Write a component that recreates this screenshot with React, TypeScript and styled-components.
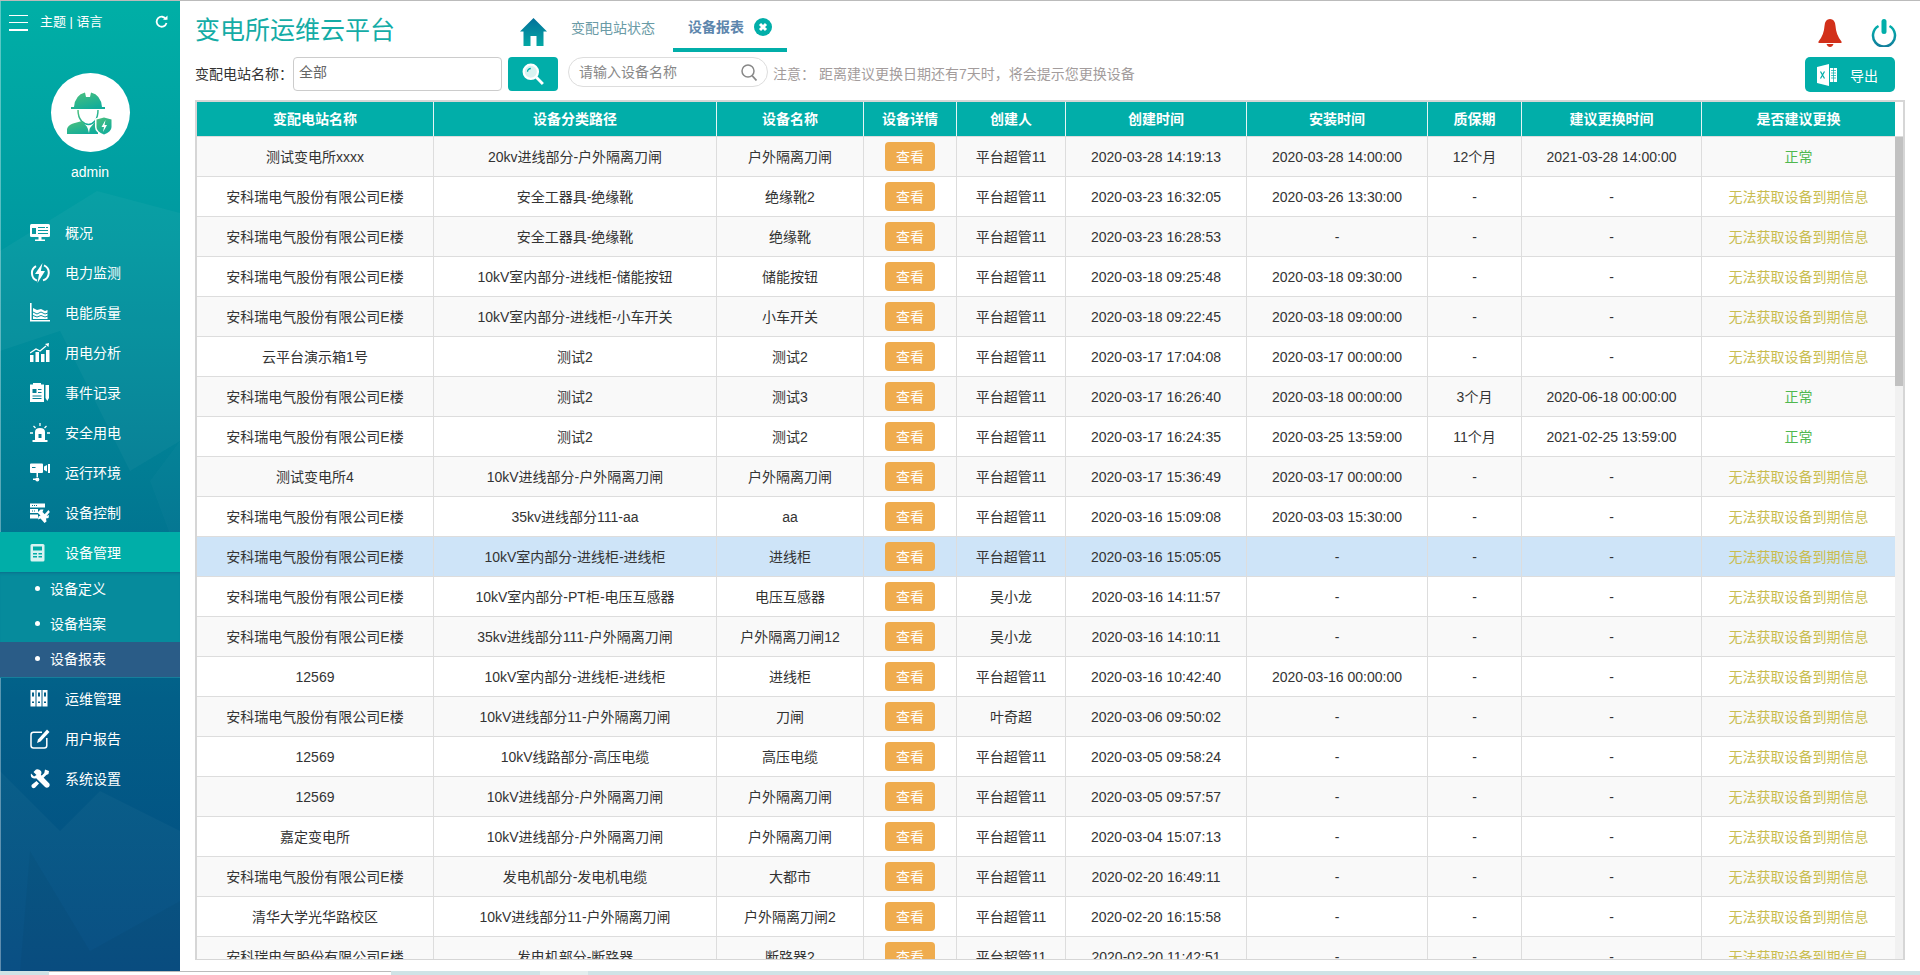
import React from "react";
import styled, { createGlobalStyle } from "styled-components";

const Global = createGlobalStyle`
  html, body { margin: 0; padding: 0; height: 100%; overflow: hidden; background: #fff; }
  body { font-family: "Liberation Sans", "Noto Sans CJK SC", sans-serif; font-size: 14px; line-height: 20px; color: #333; }
  * { box-sizing: border-box; }
`;

const TEAL = "#01aea9";
const COLS = "236px 283px 147px 93px 109px 181px 181px 94px 180px 194px";

const Page = styled.div`
  width: 1920px;
  height: 975px;
  display: flex;
  flex-direction: column;
  border-top: 1px solid #bbb;
`;
const Body = styled.div`
  flex: 1;
  min-height: 0;
  display: flex;
`;
const Sidebar = styled.aside`
  position: relative;
  width: 180px;
  flex: none;
  background: linear-gradient(180deg, #00afa6 0%, #0098a0 25%, #017b93 50%, #025f88 72%, #034a80 100%);
  box-shadow: inset 1px 0 rgba(255, 255, 255, 0.35);
  color: #fff;
  overflow: hidden;
`;
const SideArt = styled.svg`
  position: absolute;
  left: 0;
  top: 0;
  width: 180px;
  height: 970px;
  pointer-events: none;
`;
const SideContent = styled.div`
  position: relative;
`;
const SideTop = styled.div`
  height: 43px;
  display: flex;
  align-items: center;
  padding: 0 12px 0 9px;
  font-size: 13px;
`;
const SideTopLabel = styled.span`
  margin: -2px 0 0 12px;
  flex: 1;
`;
const Refresh = styled.svg`
  margin-top: -3px;
`;
const Burger = styled.span`
  width: 19px;
  height: 16px;
  flex: none;
  display: flex;
  flex-direction: column;
  justify-content: space-between;
  & > i { display: block; height: 1.5px; background: #fff; }
`;
const Profile = styled.div`
  display: flex;
  flex-direction: column;
  align-items: center;
  padding-top: 29px;
  height: 168px;
`;
const Avatar = styled.div`
  width: 79px;
  height: 79px;
  border-radius: 50%;
  background: #fff;
  display: flex;
  align-items: center;
  justify-content: center;
`;
const UserName = styled.div`
  margin-top: 12px;
  line-height: 16px;
  font-size: 14px;
`;
const MenuItem = styled.div<{ $active?: boolean }>`
  height: 40px;
  display: flex;
  align-items: center;
  padding: 2px 0 0 30px;
  background: ${(p) => (p.$active ? "#00aea8" : "transparent")};
  & > svg { width: 20px; height: 20px; flex: none; margin-right: 15px; }
`;
const SubList = styled.div`
  background: #068b9c;
  box-shadow: inset 0 3px 3px -2px rgba(20, 70, 120, 0.45);
  border-bottom: 1px solid #167f9c;
`;
const SubItem = styled.div<{ $active?: boolean }>`
  height: 35px;
  display: flex;
  align-items: center;
  padding: 0 0 2px 35px;
  background: ${(p) => (p.$active ? "#2a5c87" : "transparent")};
  &::before {
    content: "";
    width: 5px;
    height: 5px;
    border-radius: 50%;
    background: #fff;
    margin-right: 10px;
  }
`;
const Main = styled.main`
  flex: 1;
  min-width: 0;
  display: flex;
  flex-direction: column;
  padding: 0 15px 11px 15px;
  background: #fff;
`;
const Header = styled.header`
  height: 51px;
  display: flex;
  align-items: flex-start;
`;
const Title = styled.h1`
  margin: 14px 0 0;
  width: 325px;
  font-size: 25px;
  line-height: 30px;
  font-weight: 400;
  color: #14aca6;
`;
const HomeLink = styled.span`
  margin-top: 17px;
  width: 27px;
  height: 28px;
  flex: none;
  display: block;
  & > svg { display: block; }
`;
const Tabs = styled.nav`
  display: flex;
  margin-left: 23px;
`;
const Tab = styled.span`
  margin: 17px 18px 0 1px;
  line-height: 20px;
  height: 20px;
  color: #6a9ba6;
  font-size: 14px;
`;
const ActiveTab = styled.span`
  height: 51px;
  width: 114px;
  padding: 16px 0 0 15px;
  border-bottom: 4px solid ${TEAL};
  display: flex;
  align-items: flex-start;
  gap: 10px;
  color: #5d86ad;
  font-weight: 700;
  font-size: 14px;
  line-height: 20px;
  & > svg { margin-top: 1px; }
`;
const HeadRight = styled.div`
  margin-left: auto;
  margin-right: 8px;
  display: flex;
  gap: 29px;
  padding-top: 18px;
`;
const Toolbar = styled.div`
  height: 48px;
  padding-top: 5px;
  display: flex;
  align-items: flex-start;
`;
const FieldLabel = styled.label`
  margin-top: 9px;
  font-size: 14px;
  line-height: 16px;
  width: 98px;
  color: #333;
`;
const SelectBox = styled.div`
  width: 209px;
  height: 34px;
  border: 1px solid #ccc;
  border-radius: 4px;
  padding-left: 5px;
  line-height: 28px;
  color: #666;
  font-size: 14px;
`;
const SearchBtn = styled.button`
  width: 50px;
  height: 34px;
  margin-left: 6px;
  border: 0;
  padding: 0;
  border-radius: 4px;
  background: ${TEAL};
  display: flex;
  align-items: center;
  justify-content: center;
`;
const SearchWrap = styled.div`
  width: 200px;
  height: 30px;
  margin-left: 10px;
  border: 1px solid #ddd;
  border-radius: 15px;
  display: flex;
  align-items: center;
  padding: 0 10px 0 10px;
  color: #888;
  font-size: 14px;
  justify-content: space-between;
`;
const Note = styled.div`
  margin-left: 5px;
  margin-top: 7px;
  line-height: 20px;
  font-size: 14px;
  color: #a39c9c;
  display: flex;
  gap: 4px;
`;
const ExportBtn = styled.button`
  margin-left: auto;
  margin-right: 10px;
  width: 90px;
  height: 35px;
  border: 0;
  border-radius: 5px;
  background: ${TEAL};
  color: #fff;
  font: 14px "Liberation Sans", "Noto Sans CJK SC", sans-serif;
  display: flex;
  align-items: center;
  padding: 0 0 0 12px;
  gap: 13px;
`;
const TableBox = styled.section`
  flex: 1;
  min-height: 0;
  display: flex;
  flex-direction: column;
  width: 1710px;
  border: 2px solid #d6d6d6;
  border-bottom-width: 1px;
`;
const HeadRow = styled.div`
  flex: none;
  display: grid;
  grid-template-columns: ${COLS};
  height: 35px;
  border-bottom: 1px solid #ddd;
`;
const HeadCell = styled.div`
  background: ${TEAL};
  color: #fff;
  font-weight: 700;
  display: flex;
  align-items: center;
  justify-content: center;
  & + & { border-left: 1px solid #e4f5f4; }
`;
const TableBody = styled.div`
  flex: 1;
  min-height: 0;
  display: flex;
`;
const RowsViewport = styled.div`
  flex: 1;
  min-width: 0;
  overflow: hidden;
`;
const ScrollTrack = styled.div`
  flex: none;
  width: 8px;
  background: #f1f1f1;
`;
const ScrollThumb = styled.div`
  height: 249px;
  background: #c1c1c1;
`;
const Row = styled.div<{ $tone: "odd" | "even" | "hit" }>`
  display: grid;
  grid-template-columns: ${COLS};
  height: 40px;
  border-bottom: 1px solid #ddd;
  background: ${(p) => (p.$tone === "hit" ? "#cee4f8" : p.$tone === "odd" ? "#f9f9f9" : "#fff")};
`;
const Cell = styled.div<{ $color?: string }>`
  display: flex;
  align-items: center;
  justify-content: center;
  white-space: nowrap;
  color: ${(p) => p.$color || "#333"};
  & + & { border-left: 1px solid #ddd; }
`;
const ViewBtn = styled.button`
  width: 50px;
  height: 29px;
  margin-top: -1px;
  border: 0;
  padding: 0;
  border-radius: 4px;
  background: #efac4e;
  color: #fff;
  font: 14px "Liberation Sans", "Noto Sans CJK SC", sans-serif;
`;
const BottomStrip = styled.div`
  flex: none;
  height: 4px;
  display: grid;
  grid-template-columns: 49px 342px 149px 48px 1fr;
  background: #cfe3e6;
`;
const StripTab = styled.span<{ $tone?: string }>`
  background: ${(p) => p.$tone || "transparent"};
  ${(p) => (p.$tone === "#fff" ? "border-top: 1px solid #bbb;" : "")}
`;

const S = "安科瑞电气股份有限公司E楼";
const P = "平台超管11";
const N = "无法获取设备到期信息";
type R = [string, string, string, string, string, string, string?, string?];
const rows: R[] = [
  ["测试变电所xxxx", "20kv进线部分-户外隔离刀闸", "户外隔离刀闸", P, "2020-03-28 14:19:13", "2020-03-28 14:00:00", "12个月", "2021-03-28 14:00:00"],
  [S, "安全工器具-绝缘靴", "绝缘靴2", P, "2020-03-23 16:32:05", "2020-03-26 13:30:00"],
  [S, "安全工器具-绝缘靴", "绝缘靴", P, "2020-03-23 16:28:53", "-"],
  [S, "10kV室内部分-进线柜-储能按钮", "储能按钮", P, "2020-03-18 09:25:48", "2020-03-18 09:30:00"],
  [S, "10kV室内部分-进线柜-小车开关", "小车开关", P, "2020-03-18 09:22:45", "2020-03-18 09:00:00"],
  ["云平台演示箱1号", "测试2", "测试2", P, "2020-03-17 17:04:08", "2020-03-17 00:00:00"],
  [S, "测试2", "测试3", P, "2020-03-17 16:26:40", "2020-03-18 00:00:00", "3个月", "2020-06-18 00:00:00"],
  [S, "测试2", "测试2", P, "2020-03-17 16:24:35", "2020-03-25 13:59:00", "11个月", "2021-02-25 13:59:00"],
  ["测试变电所4", "10kV进线部分-户外隔离刀闸", "户外隔离刀闸", P, "2020-03-17 15:36:49", "2020-03-17 00:00:00"],
  [S, "35kv进线部分111-aa", "aa", P, "2020-03-16 15:09:08", "2020-03-03 15:30:00"],
  [S, "10kV室内部分-进线柜-进线柜", "进线柜", P, "2020-03-16 15:05:05", "-"],
  [S, "10kV室内部分-PT柜-电压互感器", "电压互感器", "吴小龙", "2020-03-16 14:11:57", "-"],
  [S, "35kv进线部分111-户外隔离刀闸", "户外隔离刀闸12", "吴小龙", "2020-03-16 14:10:11", "-"],
  ["12569", "10kV室内部分-进线柜-进线柜", "进线柜", P, "2020-03-16 10:42:40", "2020-03-16 00:00:00"],
  [S, "10kV进线部分11-户外隔离刀闸", "刀闸", "叶奇超", "2020-03-06 09:50:02", "-"],
  ["12569", "10kV线路部分-高压电缆", "高压电缆", P, "2020-03-05 09:58:24", "-"],
  ["12569", "10kV进线部分-户外隔离刀闸", "户外隔离刀闸", P, "2020-03-05 09:57:57", "-"],
  ["嘉定变电所", "10kV进线部分-户外隔离刀闸", "户外隔离刀闸", P, "2020-03-04 15:07:13", "-"],
  [S, "发电机部分-发电机电缆", "大都市", P, "2020-02-20 16:49:11", "-"],
  ["清华大学光华路校区", "10kV进线部分11-户外隔离刀闸", "户外隔离刀闸2", P, "2020-02-20 16:15:58", "-"],
  [S, "发电机部分-断路器", "断路器2", P, "2020-02-20 11:42:51", "-"],
];
const heads = ["变配电站名称", "设备分类路径", "设备名称", "设备详情", "创建人", "创建时间", "安装时间", "质保期", "建议更换时间", "是否建议更换"];

const W = "#fff";
const icons: Record<string, React.ReactNode> = {
  overview: (
    <svg viewBox="0 0 20 20">
      <path d="M0 2.500Q0 1 1.500 1h17Q20 1 20 2.500V13q0 1-1.500 1h-17Q0 14 0 13z" fill={W} />
      <path d="M2 5h4v6H2zM8 4h7v1H8zM16 4h2v1h-2zM8 7h10v1H8zM8 10h10v1H8z" fill="#0a9aa0" />
      <path d="M8.500 14h3v2.500H15V18H5v-1.500h3.500z" fill={W} />
    </svg>
  ),
  power: (
    <svg viewBox="0 0 20 20">
      <path d="M6 3.200A8 8 0 0 0 7 17.600M14 2.400a8 8 0 0 1-1 15" fill="none" stroke={W} strokeWidth="2" />
      <path d="M12.500 0L5 11h4l-1.500 9L15 8h-4.200z" fill={W} />
    </svg>
  ),
  quality: (
    <svg viewBox="0 0 20 20">
      <path d="M0 0h1.600v17H20v1.600H0z" fill={W} />
      <path d="M3 5l4 2 4-1 4 2 2.500-1v9H3z" fill={W} />
      <path d="M3 9l4 2 4-2 4 2 3-1M3 12.500l4 1.500 4-1.500 4 1.500 3-1" fill="none" stroke="#0a92a0" strokeWidth="1" />
    </svg>
  ),
  analysis: (
    <svg viewBox="0 0 20 20">
      <path d="M0 12h3.500v7H0zM5.500 9H9v10H5.500zM11 11h3.500v8H11zM16 7h3.500v12H16z" fill={W} />
      <path d="M0 10l6-4 4 2 6-5" fill="none" stroke={W} strokeWidth="1.300" />
      <path d="M15 1l4-1-.5 4z" fill={W} />
    </svg>
  ),
  events: (
    <svg viewBox="0 0 20 20">
      <path d="M0 1.500h14V19H0zM15.500 2H19v13l-1.700 3-1.800-3z" fill={W} />
      <path d="M3 0h8v3H3z" fill={W} />
      <path d="M2.500 6h4v4h-4zM8 6h3.500v1H8zM8 9h3.500v1H8zM2.500 12.500h9v1h-9zM2.500 15h9v1h-9z" fill="#067f95" />
    </svg>
  ),
  safety: (
    <svg viewBox="0 0 20 20">
      <path d="M5 17V9q0-4 5-4t5 4v8z" fill={W} />
      <path d="M2.500 17h15v2h-15z" fill={W} />
      <path d="M8.500 11h3v4h-3z" fill="#067c93" />
      <path d="M10 0v3M3.500 3l2 2M16.500 3l-2 2M0 10h3M17 10h3" stroke={W} strokeWidth="1.300" />
    </svg>
  ),
  env: (
    <svg viewBox="0 0 20 20">
      <path d="M0 1.500Q0 .5 1 .5h11q1 0 1 1V9q0 1-1 1H1q-1 0-1-1zM14 3.500l3-1.500v6.500l-3-1.500zM18 1h2v9h-2z" fill={W} />
      <path d="M2 4h3.500v1H2z" fill="#067a92" />
      <path d="M6.500 10h1.500v4H6.500zM3 15.500h3v1.500H3z" fill={W} />
      <circle cx="7.300" cy="16.500" r="2" fill={W} />
    </svg>
  ),
  control: (
    <svg viewBox="0 0 20 20">
      <path d="M0 .5h15v4H0zM0 6h8v4H0zM0 11.500h8v4H0z" fill={W} />
      <path d="M10.500 6.500h3l-1 2.500 4 4 2.500-1-.5 3-2.500.5.500 3-2 1.500-4-4.500-2.500 1 .5-3 2-1-3-3z" fill={W} />
      <path d="M18.500 7L13 13l2 2 4.800-6z" fill={W} />
      <path d="M2 2h1v1H2zM4 2h1v1H4zM6 2h1v1H6zM2 7.500h1v1H2zM4 7.500h1v1H4z" fill="#027992" />
    </svg>
  ),
  device: (
    <svg viewBox="0 0 20 20">
      <path d="M2 1h11q1.500 0 1.500 1.500v14.500q0 1.500-1.500 1.500H2q-1.500 0-1.500-1.500V2.500Q.5 1 2 1z" fill="#d8f3f1" />
      <path d="M3 3.500h9v4H3zM3 10h4v1.500H3zM8.500 10h3.500v1.500H8.500zM8.500 13h3.500v1.500H8.500zM3 13h4v1.500H3z" fill="#02aca6" />
    </svg>
  ),
  ops: (
    <svg viewBox="0 0 20 20">
      <path d="M.5 1h5v16.500h-5zM6.500 1h5v16.500h-5zM12.500 1h5v16.500h-5z" fill={W} />
      <path d="M2 3.500h2v4H2zM8 3.500h2v4H8zM14 3.500h2v4h-2zM2 12.500h2v1.500H2zM8 12.500h2v1.500H8zM14 12.500h2v1.500h-2z" fill="#035f88" />
    </svg>
  ),
  report: (
    <svg viewBox="0 0 20 20">
      <path d="M12 3.200H3.500Q1 3.200 1 5.700v10.800q0 2.500 2.500 2.500h10.800q2.500 0 2.500-2.500V9" fill="none" stroke={W} strokeWidth="1.500" />
      <path d="M17 .5L19.500 3 10.500 12.500 7 14l1-3.500z" fill={W} />
    </svg>
  ),
  settings: (
    <svg viewBox="0 0 20 20">
      <path d="M1 4.500L4 7.500 6.500 6 3.500 3 6 .5q3-.8 5 1.500 1 2-.2 3.800l8.500 8.700q1 1.800-.5 3.500-2 1.400-4-.2L6.200 9.300Q3.500 10 1.700 8.500.4 7 1 4.500z" fill={W} />
      <path d="M15 .5l4 1.500-.5 3-2.200 1-3 3-2-2 3-3zM6.500 12L9 14.500l-4 4.300q-1.600 1-3-.3-1.200-1.500-.2-2.800z" fill={W} />
    </svg>
  ),
};

const menuBefore: [string, string, boolean?][] = [
  ["overview", "概况"],
  ["power", "电力监测"],
  ["quality", "电能质量"],
  ["analysis", "用电分析"],
  ["events", "事件记录"],
  ["safety", "安全用电"],
  ["env", "运行环境"],
  ["control", "设备控制"],
  ["device", "设备管理", true],
];
const menuAfter: [string, string][] = [
  ["ops", "运维管理"],
  ["report", "用户报告"],
  ["settings", "系统设置"],
];

function WorkerAvatar() {
  return (
    <svg width="46" height="46" viewBox="0 0 46 46">
      <defs>
        <linearGradient id="wg" x1="0" y1="0" x2="0.6" y2="1">
          <stop offset="0" stopColor="#4fc07c" />
          <stop offset="1" stopColor="#12ad9a" />
        </linearGradient>
      </defs>
      <path d="M7 17Q8 5 18 2.500L19 7h4l1-4.500Q34 5 35 17h3v2H4v-2z" fill="url(#wg)" />
      <path d="M11 20q0 7 3.500 11 3.500 3.500 7 3.500t6.500-3.500q3-4 3-11" fill="none" stroke="url(#wg)" strokeWidth="1.500" />
      <path d="M0 43V39q1-4 6-5.500l9-2.500 6 7 1 1 1-1 5-6 3 1v11H0z" fill="url(#wg)" />
      <path d="M20 36h3l-1 7z" fill="#fff" />
      <path d="M37 26l9 2.500v8.500q0 5.500-9 9-9-3.500-9-9v-8.500z" fill="#fff" />
      <path d="M37 27.500l7.500 2v7.500q0 4.500-7.500 7.500-7.500-3-7.500-7.500v-7.500z" fill="url(#wg)" />
      <path d="M38.500 30l-4 7h2.500l-1 5 4-7h-2.500z" fill="#fff" />
    </svg>
  );
}

export default function App() {
  return (
    <>
      <Global />
      <Page>
        <Body>
          <Sidebar>
            <SideArt viewBox="0 0 180 970">
              <path d="M0 250L97 190 180 212V440L130 470 60 330 0 350z" fill="#fff" opacity="0.035" />
              <path d="M180 440L150 480 180 560z" fill="#fff" opacity="0.02" />
              <path d="M0 770L60 830 100 790 180 830V970H0z" fill="#fff" opacity="0.03" />
              <path d="M30 850L90 950 180 900V970H20z" fill="#000" opacity="0.03" />
            </SideArt>
            <SideContent>
              <SideTop>
                <Burger><i /><i /><i /></Burger>
                <SideTopLabel>主题 | 语言</SideTopLabel>
                <Refresh width="13" height="13" viewBox="0 0 13 13">
                  <path d="M11 4.200A5 5 0 1 0 11.500 8" fill="none" stroke="#fff" strokeWidth="1.800" />
                  <path d="M8 4.800h4.500V.5z" fill="#fff" />
                </Refresh>
              </SideTop>
              <Profile>
                <Avatar><WorkerAvatar /></Avatar>
                <UserName>admin</UserName>
              </Profile>
              {menuBefore.map(([k, label, active]) => (
                <MenuItem key={k} $active={active}>{icons[k]}{label}</MenuItem>
              ))}
              <SubList>
                <SubItem>设备定义</SubItem>
                <SubItem>设备档案</SubItem>
                <SubItem $active>设备报表</SubItem>
              </SubList>
              {menuAfter.map(([k, label]) => (
                <MenuItem key={k}>{icons[k]}{label}</MenuItem>
              ))}
            </SideContent>
          </Sidebar>
          <Main>
            <Header>
              <Title>变电所运维云平台</Title>
              <HomeLink>
                <svg width="27" height="28" viewBox="0 0 27 28">
                  <defs>
                    <linearGradient id="hg" x1="0" y1="0" x2="0" y2="1">
                      <stop offset="0" stopColor="#03709a" />
                      <stop offset="1" stopColor="#04a8a4" />
                    </linearGradient>
                  </defs>
                  <path d="M13.500 0L27 13.500h-3.500V28h-7V18h-6v10h-7V13.500H0z" fill="url(#hg)" />
                </svg>
              </HomeLink>
              <Tabs>
                <Tab>变配电站状态</Tab>
                <ActiveTab>
                  设备报表
                  <svg width="18" height="18" viewBox="0 0 18 18">
                    <circle cx="9" cy="9" r="9" fill={TEAL} />
                    <path d="M6 6l6 6M12 6l-6 6" stroke="#fff" strokeWidth="3" />
                  </svg>
                </ActiveTab>
              </Tabs>
              <HeadRight>
                <svg width="24" height="28" viewBox="0 0 24 28">
                  <path d="M12 0q5 0 5.500 7 .5 9 6 15.500v1.500H.5v-1.500Q6 16 6.500 7 7 0 12 0z" fill="#d2301a" />
                  <path d="M8.500 25h7q-1 3-3.500 3t-3.500-3z" fill="#d2301a" />
                </svg>
                <svg width="26" height="28" viewBox="0 0 26 28">
                  <defs>
                    <linearGradient id="pg" x1="0" y1="0" x2="0" y2="1">
                      <stop offset="0" stopColor="#02aeab" />
                      <stop offset="1" stopColor="#117f9c" />
                    </linearGradient>
                  </defs>
                  <path d="M7.500 7A11 11 0 1 0 18.500 7" fill="none" stroke="url(#pg)" strokeWidth="2.500" />
                  <rect x="10.500" y="0" width="5" height="15" rx="2.500" fill={TEAL} />
                </svg>
              </HeadRight>
            </Header>
            <Toolbar>
              <FieldLabel>{"变配电站名称\uFF1A"}</FieldLabel>
              <SelectBox>全部</SelectBox>
              <SearchBtn aria-label="查询">
                <svg width="22" height="22" viewBox="0 0 20 20">
                  <circle cx="8" cy="8" r="6.500" fill="#d8f3f1" stroke="#fff" strokeWidth="2" />
                  <path d="M5 8a3 3 0 0 1 3-3" fill="none" stroke={TEAL} strokeWidth="1.200" />
                  <path d="M13 13l6 6" stroke="#fff" strokeWidth="2.600" />
                </svg>
              </SearchBtn>
              <SearchWrap>
                请输入设备名称
                <svg width="16" height="17" viewBox="0 0 16 17">
                  <circle cx="7" cy="7" r="6" fill="none" stroke="#888" strokeWidth="1.500" />
                  <path d="M11 11.500l4.500 5" stroke="#888" strokeWidth="1.800" />
                </svg>
              </SearchWrap>
              <Note>
                <span>{"注意\uFF1A"}</span>
                <span>{"距离建议更换日期还有7天时\uFF0C将会提示您更换设备"}</span>
              </Note>
              <ExportBtn>
                <svg width="20" height="22" viewBox="0 0 20 22">
                  <path d="M0 3l12-3v22L0 19z" fill="#fff" />
                  <path d="M13 4h7v14h-7z" fill="#fff" />
                  <path d="M14 6.500h5M14 9h5M14 11.500h5M14 14h5M16.500 4v14" stroke={TEAL} strokeWidth=".7" />
                  <path d="M3.500 7.500l4 7M7.500 7.500l-4 7" stroke={TEAL} strokeWidth="1.200" />
                </svg>
                导出
              </ExportBtn>
            </Toolbar>
            <TableBox>
              <HeadRow>
                {heads.map((h) => <HeadCell key={h}>{h}</HeadCell>)}
              </HeadRow>
              <TableBody>
                <RowsViewport>
                  {rows.map((r, i) => {
                    const ok = !!r[6];
                    return (
                      <Row key={i} $tone={i === 10 ? "hit" : i % 2 === 0 ? "odd" : "even"}>
                        <Cell>{r[0]}</Cell>
                        <Cell>{r[1]}</Cell>
                        <Cell>{r[2]}</Cell>
                        <Cell><ViewBtn>查看</ViewBtn></Cell>
                        <Cell>{r[3]}</Cell>
                        <Cell>{r[4]}</Cell>
                        <Cell>{r[5]}</Cell>
                        <Cell>{r[6] || "-"}</Cell>
                        <Cell>{r[7] || "-"}</Cell>
                        <Cell $color={ok ? "#4fb84f" : "#c9bd50"}>{ok ? "正常" : N}</Cell>
                      </Row>
                    );
                  })}
                </RowsViewport>
                <ScrollTrack><ScrollThumb /></ScrollTrack>
              </TableBody>
            </TableBox>
          </Main>
        </Body>
        <BottomStrip>
          <StripTab />
          <StripTab $tone="#fff" />
          <StripTab />
          <StripTab $tone="#e3eeee" />
          <StripTab />
        </BottomStrip>
      </Page>
    </>
  );
}
